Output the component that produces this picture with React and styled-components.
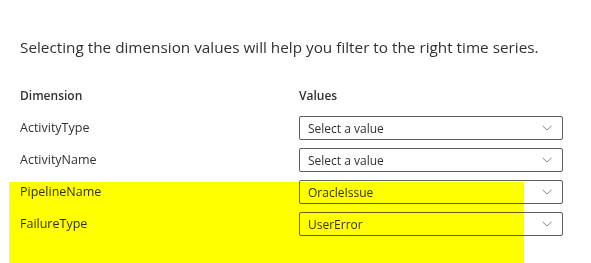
import React from "react";
import styled, { createGlobalStyle } from "styled-components";

const GlobalStyle = createGlobalStyle`
  html, body {
    margin: 0;
    padding: 0;
    background: #ffffff;
  }
  body {
    font-family: "Open Sans", "Noto Sans", sans-serif;
    color: #323130;
  }
`;

const Page = styled.div`
  position: relative;
  width: 591px;
  height: 263px;
  overflow: hidden;
  padding: 37px 0 0 20px;
  box-sizing: border-box;
`;

const Intro = styled.p`
  margin: 0;
  font-size: 15.3px;
  line-height: 20px;
`;

const Table = styled.div`
  margin-top: 27px;
  display: grid;
  grid-template-columns: 279px 264px;
  grid-auto-rows: 24px;
  row-gap: 8px;
  align-items: center;
`;

const HeadCell = styled.div`
  font-size: 12px;
  font-weight: 600;
  line-height: 24px;
`;

const Label = styled.div`
  font-size: 12.5px;
  line-height: 24px;
`;

const Dropdown = styled.div`
  height: 24px;
  box-sizing: border-box;
  border: 1px solid #605e5c;
  border-radius: 2px;
  display: flex;
  align-items: center;
  justify-content: space-between;
  padding: 0 10px 0 8px;
  font-size: 12px;
`;

const Chevron = styled.svg`
  width: 10px;
  height: 6px;
  flex: none;
`;

const Highlight = styled.div`
  position: absolute;
  left: 9px;
  top: 182px;
  width: 515px;
  height: 81px;
  background: #ffff00;
  mix-blend-mode: multiply;
  pointer-events: none;
`;

const rows = [
  { name: "ActivityType", value: "Select a value" },
  { name: "ActivityName", value: "Select a value" },
  { name: "PipelineName", value: "OracleIssue" },
  { name: "FailureType", value: "UserError" },
];

export default function App() {
  return (
    <>
      <GlobalStyle />
      <Page>
        <Intro>Selecting the dimension values will help you filter to the right time series.</Intro>
        <Table>
          <HeadCell>Dimension</HeadCell>
          <HeadCell>Values</HeadCell>
          {rows.map((r) => (
            <React.Fragment key={r.name}>
              <Label>{r.name}</Label>
              <Dropdown>
                <span>{r.value}</span>
                <Chevron viewBox="0 0 10 6">
                  <path d="M0.5 0.8 L5 5 L9.5 0.8" fill="none" stroke="#8a8886" strokeWidth="1" />
                </Chevron>
              </Dropdown>
            </React.Fragment>
          ))}
        </Table>
        <Highlight />
      </Page>
    </>
  );
}
